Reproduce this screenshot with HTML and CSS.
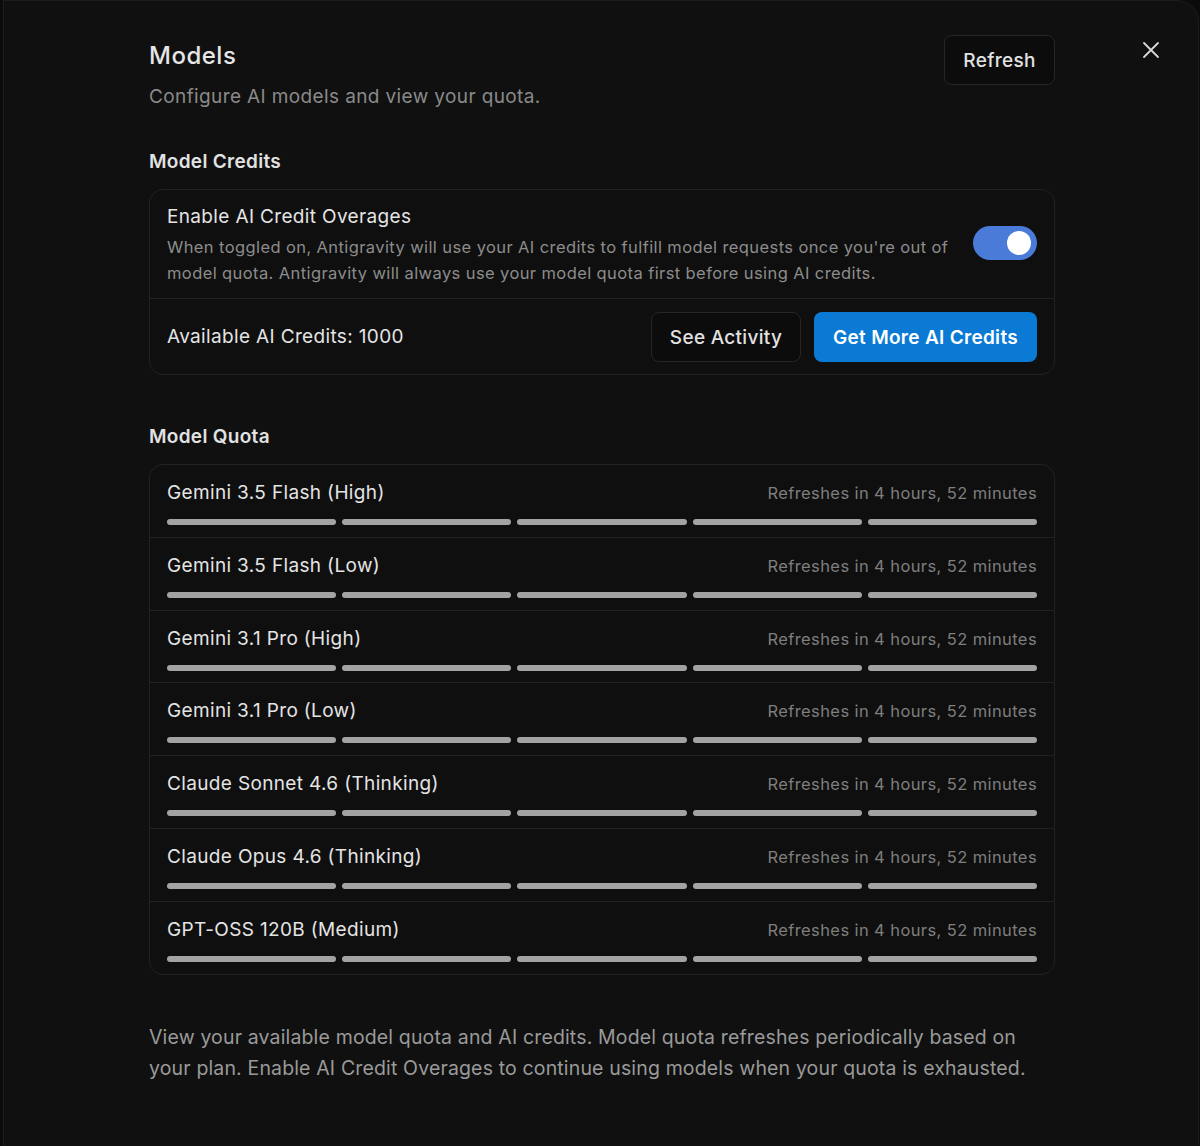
FILE: index.html
```html
<!DOCTYPE html>
<html>
<head>
<meta charset="utf-8">
<link rel="stylesheet" href="styles.css">
</head>
<body>
<div class="panel">
  <button class="close" aria-label="Close">
    <svg width="18" height="18" viewBox="0 0 18 18"><path d="M2 2 L16 16 M16 2 L2 16" stroke="#d8d8d8" stroke-width="1.8" stroke-linecap="round"/></svg>
  </button>
  <div class="content">
    <header class="head">
      <div>
        <h1 class="title">Models</h1>
        <p class="subtitle">Configure AI models and view your quota.</p>
      </div>
      <button class="btn btn-outline btn-refresh">Refresh</button>
    </header>

    <h2 class="section">Model Credits</h2>
    <div class="card">
      <div class="row-overage">
        <div class="overage-text">
          <div class="row-title">Enable AI Credit Overages</div>
          <p class="desc">When toggled on, Antigravity will use your AI credits to fulfill model requests once you're out of model quota. Antigravity will always use your model quota first before using AI credits.</p>
        </div>
        <div class="toggle"><span class="knob"></span></div>
      </div>
      <div class="row-credits">
        <div class="row-title">Available AI Credits: 1000</div>
        <div class="actions">
          <button class="btn btn-outline btn-activity">See Activity</button>
          <button class="btn btn-primary">Get More AI Credits</button>
        </div>
      </div>
    </div>

    <h2 class="section section-quota">Model Quota</h2>
    <div class="card quota">
      <div class="qrow"><div class="qhead"><span class="qname">Gemini 3.5 Flash (High)</span><span class="qtime">Refreshes in 4 hours, 52 minutes</span></div><div class="bars"><i></i><i></i><i></i><i></i><i></i></div></div>
      <div class="qrow"><div class="qhead"><span class="qname">Gemini 3.5 Flash (Low)</span><span class="qtime">Refreshes in 4 hours, 52 minutes</span></div><div class="bars"><i></i><i></i><i></i><i></i><i></i></div></div>
      <div class="qrow"><div class="qhead"><span class="qname">Gemini 3.1 Pro (High)</span><span class="qtime">Refreshes in 4 hours, 52 minutes</span></div><div class="bars"><i></i><i></i><i></i><i></i><i></i></div></div>
      <div class="qrow"><div class="qhead"><span class="qname">Gemini 3.1 Pro (Low)</span><span class="qtime">Refreshes in 4 hours, 52 minutes</span></div><div class="bars"><i></i><i></i><i></i><i></i><i></i></div></div>
      <div class="qrow"><div class="qhead"><span class="qname">Claude Sonnet 4.6 (Thinking)</span><span class="qtime">Refreshes in 4 hours, 52 minutes</span></div><div class="bars"><i></i><i></i><i></i><i></i><i></i></div></div>
      <div class="qrow"><div class="qhead"><span class="qname">Claude Opus 4.6 (Thinking)</span><span class="qtime">Refreshes in 4 hours, 52 minutes</span></div><div class="bars"><i></i><i></i><i></i><i></i><i></i></div></div>
      <div class="qrow"><div class="qhead"><span class="qname">GPT-OSS 120B (Medium)</span><span class="qtime">Refreshes in 4 hours, 52 minutes</span></div><div class="bars"><i></i><i></i><i></i><i></i><i></i></div></div>
    </div>

    <p class="footer">View your available model quota and AI credits. Model quota refreshes periodically based on your plan. Enable AI Credit Overages to continue using models when your quota is exhausted.</p>
  </div>
</div>
</body>
</html>
```

FILE: styles.css
```css
* { box-sizing: border-box; }
html, body { margin: 0; padding: 0; }
body {
  background: #0b0b0b;
  font-family: Inter, "Noto Sans", "Liberation Sans", sans-serif;
  color: #e4e4e4;
  width: 1200px;
  height: 1146px;
  overflow: hidden;
  letter-spacing: 0.35px;
}
.panel {
  position: relative;
  margin-left: 3px;
  width: 1196px;
  height: 1160px;
  background: #101010;
  border-left: 1px solid #1c1c1c;
  border-right: 1px solid #1c1c1c;
  border-top-right-radius: 22px;
  border-top: 1px solid #1c1c1c;
}
.close {
  position: absolute;
  top: 40px;
  left: 1138px;
  background: none;
  border: 0;
  padding: 0;
  width: 18px;
  height: 18px;
}
.content {
  width: 906px;
  margin-left: 145px;
  padding-top: 34px;
}
.head {
  display: flex;
  justify-content: space-between;
  align-items: flex-start;
}
.title {
  margin: 6px 0 0;
  font-size: 24px;
  font-weight: 500;
  line-height: 30px;
  color: #e6e6e6;
  letter-spacing: 0.5px;
}
.subtitle {
  margin: 14px 0 0;
  font-size: 19px;
  line-height: 24px;
  color: #8a8a8a;
  letter-spacing: 0.38px;
}
.btn {
  font-family: inherit;
  font-size: 19px;
  font-weight: 500;
  height: 50px;
  border-radius: 8px;
  padding: 0;
  cursor: pointer;
  letter-spacing: 0.3px;
}
.btn-outline {
  background: #0c0c0c;
  border: 1px solid #262626;
  color: #e2e2e2;
}
.btn-refresh { width: 111px; }
.btn-activity { width: 150px; }
.btn-primary {
  width: 223px;
  background: #0a7ad4;
  border: 0;
  color: #ffffff;
  font-weight: 600;
}
.section {
  margin: 41px 0 0;
  font-size: 19px;
  font-weight: 600;
  line-height: 24px;
  color: #e2e2e2;
  letter-spacing: 0.3px;
}
.section-quota { margin-top: 50px; }
.card {
  margin-top: 15px;
  border: 1px solid #222222;
  border-radius: 14px;
  background: #0f0f0f;
}
.row-overage {
  display: flex;
  align-items: flex-start;
  gap: 20px;
  padding: 14px 17px 12px;
  border-bottom: 1px solid #222222;
}
.overage-text { flex: 1; }
.row-title {
  font-size: 19px;
  line-height: 26px;
  color: #e4e4e4;
}
.desc {
  margin: 4px 0 0;
  font-size: 16.5px;
  line-height: 26px;
  color: #8c8c8c;
  letter-spacing: 0.4px;
}
.toggle {
  flex: none;
  width: 64px;
  height: 34px;
  border-radius: 17px;
  background: #4b7bd8;
  position: relative;
  margin-top: 22px;
}
.knob {
  position: absolute;
  right: 6px;
  top: 5px;
  width: 24px;
  height: 24px;
  border-radius: 50%;
  background: #ffffff;
}
.row-credits {
  display: flex;
  justify-content: space-between;
  align-items: center;
  padding: 13px 17px 12px;
}
.actions { display: flex; gap: 13px; }
.quota { overflow: hidden; }
.qrow {
  padding: 16px 17px 11.8px;
  border-bottom: 1px solid #222222;
}
.qrow:last-child { border-bottom: 0; }
.qhead {
  display: flex;
  justify-content: space-between;
  align-items: baseline;
}
.qname {
  font-size: 19px;
  line-height: 24px;
  color: #e4e4e4;
}
.qtime {
  font-size: 16.5px;
  color: #7e7e7e;
  letter-spacing: 0.4px;
}
.bars {
  display: flex;
  gap: 6px;
  margin-top: 14px;
}
.bars i {
  flex: 1;
  height: 6px;
  border-radius: 3px;
  background: #a3a3a3;
}
.footer {
  margin: 47px 0 0;
  font-size: 19.5px;
  line-height: 31px;
  color: #9a9a9a;
  letter-spacing: 0.15px;
}
```
